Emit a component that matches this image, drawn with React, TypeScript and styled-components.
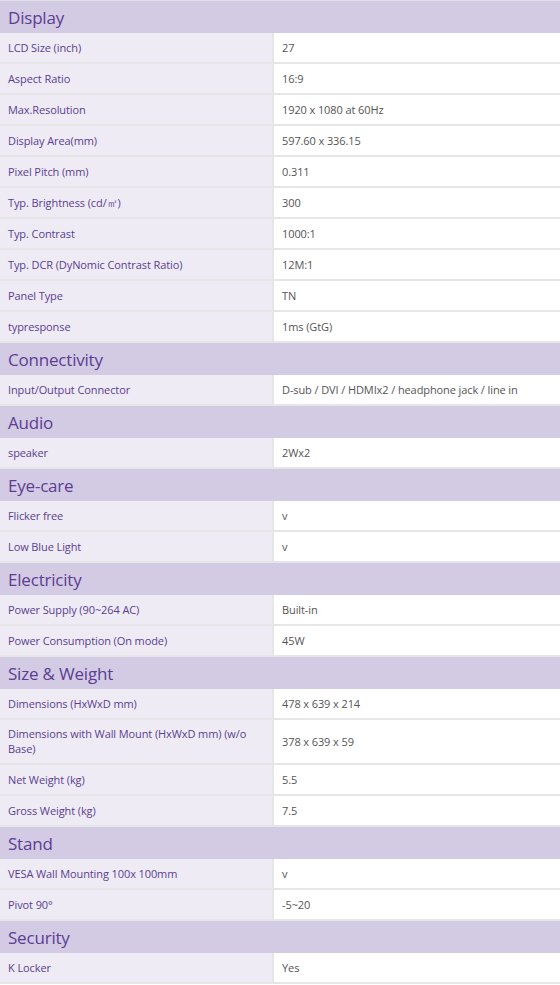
import React from "react";
import styled, { createGlobalStyle } from "styled-components";

const Global = createGlobalStyle`
  html, body { margin: 0; padding: 0; background: #ffffff; }
  body { font-family: "Open Sans", "Noto Sans", sans-serif; }
`;

type Spec = [string, string];
type Section = { title: string; rows: Spec[] };

const data: Section[] = [
  {
    title: "Display",
    rows: [
      ["LCD Size (inch)", "27"],
      ["Aspect Ratio", "16:9"],
      ["Max.Resolution", "1920 x 1080 at 60Hz"],
      ["Display Area(mm)", "597.60 x 336.15"],
      ["Pixel Pitch (mm)", "0.311"],
      ["Typ. Brightness (cd/㎡)", "300"],
      ["Typ. Contrast", "1000:1"],
      ["Typ. DCR (DyNomic Contrast Ratio)", "12M:1"],
      ["Panel Type", "TN"],
      ["typresponse", "1ms (GtG)"],
    ],
  },
  {
    title: "Connectivity",
    rows: [["Input/Output Connector", "D-sub / DVI / HDMIx2 / headphone jack / line in"]],
  },
  { title: "Audio", rows: [["speaker", "2Wx2"]] },
  {
    title: "Eye-care",
    rows: [
      ["Flicker free", "v"],
      ["Low Blue Light", "v"],
    ],
  },
  {
    title: "Electricity",
    rows: [
      ["Power Supply (90~264 AC)", "Built-in"],
      ["Power Consumption (On mode)", "45W"],
    ],
  },
  {
    title: "Size & Weight",
    rows: [
      ["Dimensions (HxWxD mm)", "478 x 639 x 214"],
      ["Dimensions with Wall Mount (HxWxD mm) (w/o Base)", "378 x 639 x 59"],
      ["Net Weight (kg)", "5.5"],
      ["Gross Weight (kg)", "7.5"],
    ],
  },
  {
    title: "Stand",
    rows: [
      ["VESA Wall Mounting 100x 100mm", "v"],
      ["Pivot 90°", "-5~20"],
    ],
  },
  { title: "Security", rows: [["K Locker", "Yes"]] },
];

const Table = styled.div`
  width: 560px;
  border-top: 1px solid #e2e0e6;
  display: flex;
  flex-direction: column;
`;

const Header = styled.div`
  height: 32px;
  box-sizing: border-box;
  background: #d3cae4;
  color: #5c3d93;
  font-family: "Open Sans", "Noto Sans", sans-serif;
  font-size: 17px;
  display: flex;
  align-items: center;
  padding-left: 8px;
  letter-spacing: -0.2px;
`;

const Row = styled.div`
  display: grid;
  grid-template-columns: 274px 1fr;
  min-height: 31px;
  box-sizing: border-box;
  border-bottom: 2px solid #e6e5e8;
`;

const Label = styled.div`
  background: #eeebf5;
  color: #5b3e91;
  font-size: 11px;
  line-height: 15px;
  letter-spacing: -0.1px;
  padding: 6px 24px 7px 8px;
  display: flex;
  align-items: center;
  border-right: 2px solid #e6e5e8;
`;

const Value = styled.div`
  background: #ffffff;
  color: #555555;
  font-size: 11px;
  line-height: 15px;
  letter-spacing: -0.1px;
  padding: 6px 8px 7px;
  display: flex;
  align-items: center;
`;

export default function App() {
  return (
    <>
      <Global />
      <Table>
        {data.map((s) => (
          <React.Fragment key={s.title}>
            <Header>{s.title}</Header>
            {s.rows.map(([k, v]) => (
              <Row key={k}>
                <Label>{k}</Label>
                <Value>{v}</Value>
              </Row>
            ))}
          </React.Fragment>
        ))}
      </Table>
    </>
  );
}
